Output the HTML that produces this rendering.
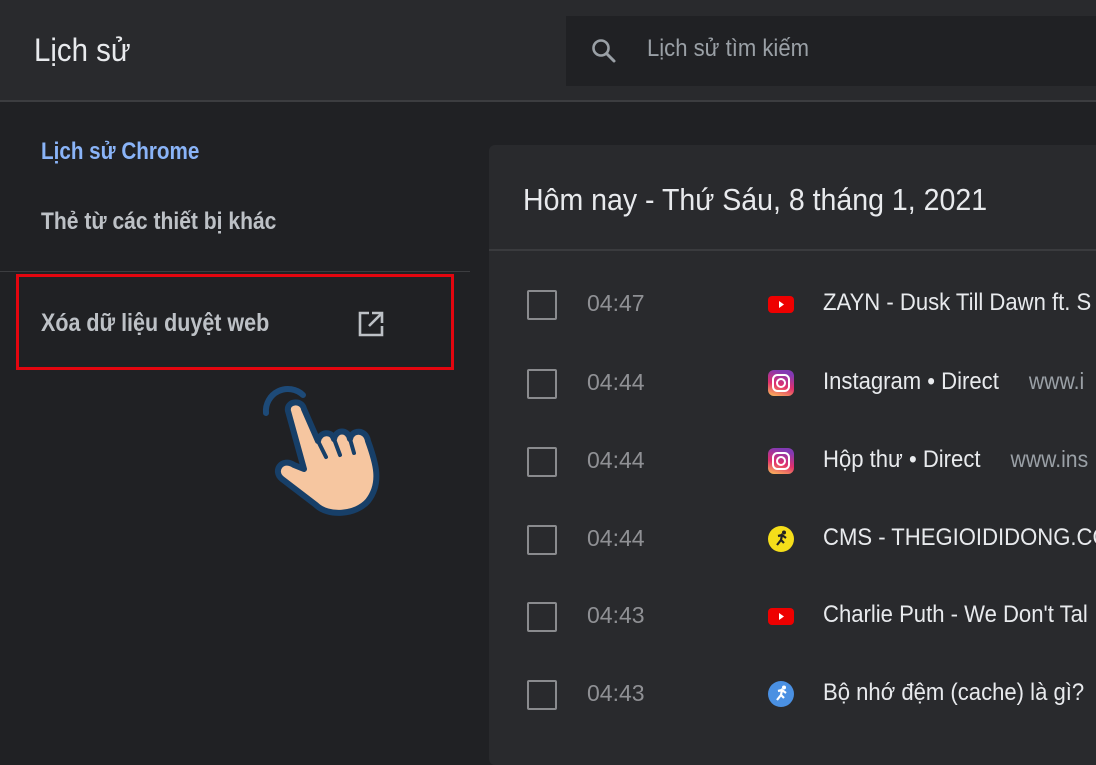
<!DOCTYPE html>
<html><head><meta charset="utf-8"><style>
body{margin:0;width:1096px;height:747px;overflow:hidden;background:#202124;font-family:"Liberation Sans",sans-serif;position:relative}
.hdr{position:absolute;left:0;top:0;width:1096px;height:100px;background:#292a2d;border-bottom:2px solid #3c3d40}
.t{position:absolute;white-space:nowrap;transform-origin:0 50%}
.search{position:absolute;left:566px;top:16px;width:530px;height:70px;background:#202124}
.card{position:absolute;left:489px;top:145px;width:620px;height:620px;background:#292a2d;border-radius:6px}
.cb{position:absolute;left:527px;width:26px;height:26px;border:2px solid #8a8b8e;border-radius:2px}
.time{color:#8f9094;font-size:23px;left:587px}
.ti{color:#e8eaed;font-size:24px;left:823px}
.url{color:#9aa0a6;font-size:23px}
.ic{position:absolute;left:768px;width:26px;height:26px}
</style></head><body>
<div class="hdr"></div>
<div class="t" style="left:34px;top:32px;font-size:32px;color:#e8eaed;transform:scaleX(.92)">Lịch sử</div>
<div class="search"></div>
<svg style="position:absolute;left:590px;top:37px" width="28" height="28" viewBox="0 0 28 28"><circle cx="11" cy="11" r="7.5" fill="none" stroke="#9aa0a6" stroke-width="2.6"/><path d="M16.5 16.5L24 24" stroke="#9aa0a6" stroke-width="3" stroke-linecap="round"/></svg>
<div class="t" style="left:647px;top:35px;font-size:24px;color:#9aa0a6;transform:scaleX(.92)">Lịch sử tìm kiếm</div>

<div class="t" style="left:41px;top:138px;font-size:24px;color:#8ab4f8;font-weight:bold;transform:scaleX(.86)">Lịch sử Chrome</div>
<div class="t" style="left:41px;top:208px;font-size:24.5px;color:#bdc1c6;font-weight:bold;transform:scaleX(.86)">Thẻ từ các thiết bị khác</div>
<div style="position:absolute;left:0;top:271px;width:470px;height:1px;background:#3c3d40"></div>
<div style="position:absolute;left:16px;top:274px;width:432px;height:90px;border:3px solid #e3060f"></div>
<div class="t" style="left:41px;top:309px;font-size:25px;color:#bdc1c6;font-weight:bold;transform:scaleX(.86)">Xóa dữ liệu duyệt web</div>
<svg style="position:absolute;left:357px;top:310px" width="28" height="28" viewBox="0 0 28 28"><path d="M12 3H3v22h22v-9" fill="none" stroke="#bdc1c6" stroke-width="2.6"/><path d="M15 3h10v10M25 3L12 16" fill="none" stroke="#bdc1c6" stroke-width="2.6"/></svg>

<svg style="position:absolute;left:258px;top:383px" width="135" height="135" viewBox="0 0 135 135">
<path d="M8 30 A22 22 0 0 1 45 12" fill="none" stroke="#1d4a78" stroke-width="6" stroke-linecap="round"/>
<path d="M30 28 C28 18 44 16 46 26 L60 58 C62 48 74 48 76 56 C78 46 90 46 92 56 C94 46 108 46 110 58 C118 80 124 100 110 118 C98 132 70 134 58 122 L24 96 C14 88 24 74 36 82 L46 86 Z" fill="#f6c6a0" stroke="#173f68" stroke-width="6" stroke-linejoin="round"/>
<path d="M60 58 L68 74 M76 56 L82 72 M92 56 L96 70" stroke="#173f68" stroke-width="4" stroke-linecap="round"/>
</svg>

<div class="card"></div>
<div class="t" style="left:523px;top:182px;font-size:31px;color:#e8eaed;transform:scaleX(.92)">Hôm nay - Thứ Sáu, 8 tháng 1, 2021</div>
<div style="position:absolute;left:489px;top:249px;width:607px;height:2px;background:#3a3b3e"></div>

<div class="cb" style="top:290px"></div><div class="t time" style="top:290px">04:47</div>
<svg class="ic" style="top:291px" viewBox="0 0 26 26"><rect x="0" y="5" width="26" height="17" rx="4" fill="#e00"/><path d="M11 10l5 3.5-5 3.5z" fill="#fff"/></svg>
<div class="t ti" style="top:289px;transform:scaleX(.92)">ZAYN - Dusk Till Dawn ft. S</div>

<div class="cb" style="top:369px"></div><div class="t time" style="top:369px">04:44</div>
<svg class="ic" style="top:370px" viewBox="0 0 26 26"><defs><linearGradient id="ig" x1="0" y1="1" x2="0.3" y2="0"><stop offset="0" stop-color="#fcc05a"/><stop offset=".5" stop-color="#e1306c"/><stop offset="1" stop-color="#833ab4"/></linearGradient></defs><rect width="26" height="26" rx="6" fill="url(#ig)"/><rect x="5" y="5" width="16" height="16" rx="4.5" fill="none" stroke="#fff" stroke-width="2"/><circle cx="13" cy="13" r="4" fill="none" stroke="#fff" stroke-width="2"/></svg>
<div class="t ti" style="top:368px;transform:scaleX(.92)">Instagram • Direct <span class="url" style="margin-left:26px">www.i</span></div>

<div class="cb" style="top:447px"></div><div class="t time" style="top:447px">04:44</div>
<svg class="ic" style="top:448px" viewBox="0 0 26 26"><rect width="26" height="26" rx="6" fill="url(#ig)"/><rect x="5" y="5" width="16" height="16" rx="4.5" fill="none" stroke="#fff" stroke-width="2"/><circle cx="13" cy="13" r="4" fill="none" stroke="#fff" stroke-width="2"/></svg>
<div class="t ti" style="top:446px;transform:scaleX(.92)">Hộp thư • Direct <span class="url" style="margin-left:26px">www.ins</span></div>

<div class="cb" style="top:525px"></div><div class="t time" style="top:525px">04:44</div>
<svg class="ic" style="top:526px" viewBox="0 0 26 26"><circle cx="13" cy="13" r="13" fill="#f5de1a"/><path d="M9 19l4-5 3 3M13 14l1-5 4 3M10 10l4-1" stroke="#222" stroke-width="2.2" fill="none"/><circle cx="16" cy="6.5" r="2" fill="#222"/></svg>
<div class="t ti" style="top:524px;transform:scaleX(.92)">CMS - THEGIOIDIDONG.CO</div>

<div class="cb" style="top:602px"></div><div class="t time" style="top:602px">04:43</div>
<svg class="ic" style="top:603px" viewBox="0 0 26 26"><rect x="0" y="5" width="26" height="17" rx="4" fill="#e00"/><path d="M11 10l5 3.5-5 3.5z" fill="#fff"/></svg>
<div class="t ti" style="top:601px;transform:scaleX(.92)">Charlie Puth - We Don't Tal</div>

<div class="cb" style="top:680px"></div><div class="t time" style="top:680px">04:43</div>
<svg class="ic" style="top:681px" viewBox="0 0 26 26"><circle cx="13" cy="13" r="13" fill="#4a90e2"/><path d="M9 19l4-5 3 3M13 14l1-5 4 3M10 10l4-1" stroke="#fff" stroke-width="2.2" fill="none"/><circle cx="16" cy="6.5" r="2" fill="#fff"/></svg>
<div class="t ti" style="top:679px;transform:scaleX(.92)">Bộ nhớ đệm (cache) là gì?</div>
</body></html>
